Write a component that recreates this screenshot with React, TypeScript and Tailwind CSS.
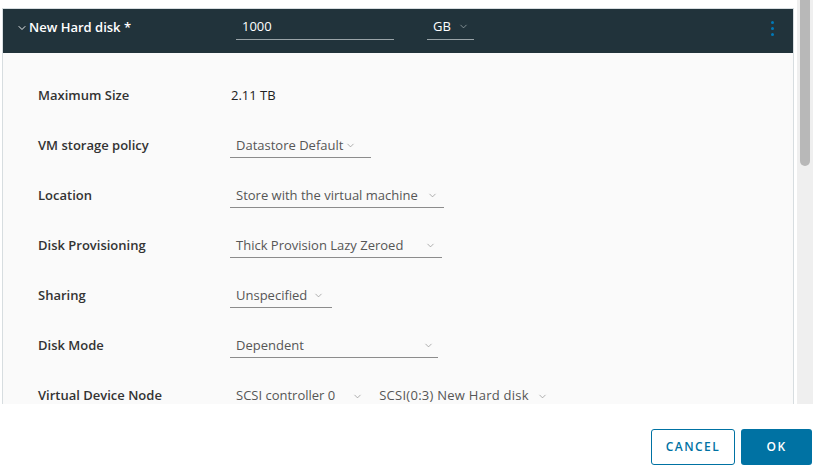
import { ChevronDown } from "lucide-react";

type Row = {
  label: string;
  value?: string;
  select?: { text: string; width: string; pad: string };
};

const rows: Row[] = [
  { label: "Maximum Size", value: "2.11 TB" },
  { label: "VM storage policy", select: { text: "Datastore Default", width: "w-[141px]", pad: "pr-[15px]" } },
  { label: "Location", select: { text: "Store with the virtual machine", width: "w-[214px]", pad: "pr-[6px]" } },
  { label: "Disk Provisioning", select: { text: "Thick Provision Lazy Zeroed", width: "w-[212px]", pad: "pr-[6px]" } },
  { label: "Sharing", select: { text: "Unspecified", width: "w-[102px]", pad: "pr-[8px]" } },
  { label: "Disk Mode", select: { text: "Dependent", width: "w-[208px]", pad: "pr-[4px]" } },
];

function Select({ text, width, pad }: { text: string; width: string; pad: string }) {
  return (
    <div
      className={`${width} ${pad} h-[24px] flex items-center justify-between border-b border-[#8c8c8c] pl-[6px] text-[13px] text-[#565656]`}
    >
      <span>{text}</span>
      <ChevronDown size={11} strokeWidth={1.5} className="text-[#8c8c8c]" />
    </div>
  );
}

export default function App() {
  return (
    <div className="w-[833px] h-[476px] bg-white font-['Open_Sans',sans-serif] overflow-hidden">
      <div className="flex h-[404px]">
        {/* Panel */}
        <div className="ml-[2px] mt-[8px] w-[792px] h-[396px] border-l border-r border-t border-[#d7dde0] bg-[#fafafa] overflow-hidden">
          {/* Header */}
          <div className="h-[44px] bg-[#21333b] flex items-center pl-[13px] pr-[18px] text-white">
            <div className="w-[220px] flex items-center gap-[1px] -mt-[7px] text-[13px] font-semibold">
              <ChevronDown size={12} strokeWidth={1.8} />
              <span>New Hard disk *</span>
            </div>
            <div className="w-[158px] h-[26px] -mt-[8px] border-b border-[#9aa4a8] pl-[6px] flex items-center text-[13px]">
              1000
            </div>
            <div className="ml-[33px] w-[47px] h-[26px] -mt-[8px] border-b border-[#9aa4a8] pl-[6px] flex items-center gap-[7px] text-[13px]">
              GB
              <ChevronDown size={11} strokeWidth={1.5} className="text-[#aab4b8]" />
            </div>
            <div className="ml-auto mr-[1px] flex flex-col gap-[3px] -mt-[6px]">
              <span className="w-[3px] h-[3px] rounded-full bg-[#0079b8]" />
              <span className="w-[3px] h-[3px] rounded-full bg-[#0079b8]" />
              <span className="w-[3px] h-[3px] rounded-full bg-[#0079b8]" />
            </div>
          </div>

          {/* Rows */}
          <div className="pt-[18px] pl-[35px]">
            {rows.map((r) => (
              <div key={r.label} className="h-[50px] flex items-center">
                <div className="w-[192px] text-[13px] font-semibold text-[#333]">{r.label}</div>
                {r.value && <div className="pl-[1px] text-[13px] text-[#222]">{r.value}</div>}
                {r.select && <Select text={r.select.text} width={r.select.width} pad={r.select.pad} />}
              </div>
            ))}
            <div className="h-[50px] flex items-center">
              <div className="w-[192px] text-[13px] font-semibold text-[#333]">Virtual Device Node</div>
              <div className="h-[24px] flex items-center pl-[6px] text-[13px] text-[#565656]">
                <span>SCSI controller 0</span>
                <ChevronDown size={11} strokeWidth={1.5} className="ml-[17px] text-[#8c8c8c]" />
                <span className="ml-[16px] tracking-[0.02em]">SCSI(0:3) New Hard disk</span>
                <ChevronDown size={11} strokeWidth={1.5} className="ml-[8px] text-[#8c8c8c]" />
              </div>
            </div>
          </div>
        </div>

        {/* Scrollbar */}
        <div className="ml-[3px] w-[16px] h-[404px] bg-[#efefef] flex justify-center">
          <div className="w-[10px] h-[166px] bg-[#b8b8b8] rounded-b-[5px]" />
        </div>
      </div>

      {/* Footer */}
      <div className="flex justify-end gap-[6px] pr-[21px] pt-[25px]">
        <button className="w-[84px] h-[36px] border border-[#0072a3] rounded-[3px] text-[#0072a3] text-[12px] font-semibold tracking-[0.12em]">
          CANCEL
        </button>
        <button className="w-[71px] h-[36px] bg-[#0072a3] rounded-[3px] text-white text-[12px] font-semibold tracking-[0.12em]">
          OK
        </button>
      </div>
    </div>
  );
}
